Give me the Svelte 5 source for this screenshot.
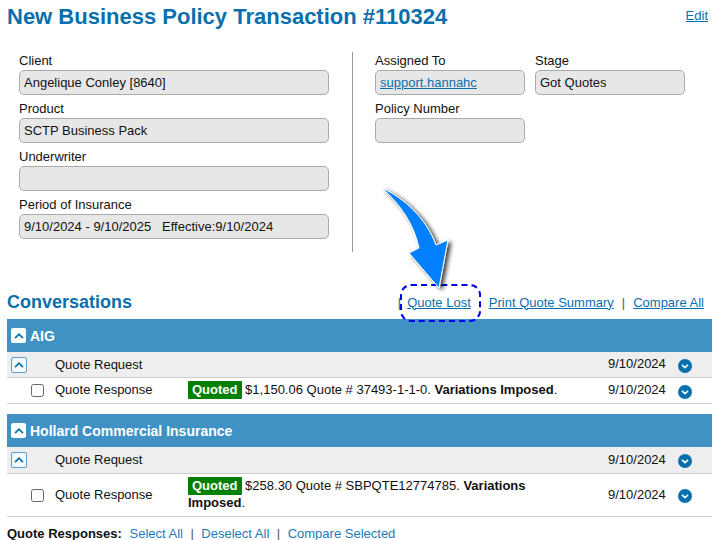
<script>
	const left = [
		{ label: 'Client', value: 'Angelique Conley [8640]' },
		{ label: 'Product', value: 'SCTP Business Pack' },
		{ label: 'Underwriter', value: '' },
		{ label: 'Period of Insurance', value: '9/10/2024 - 9/10/2025\u00a0\u00a0\u00a0Effective:9/10/2024' }
	];
</script>

{#snippet upIcon()}
	<svg viewBox="0 0 16 16" width="14" height="14" aria-hidden="true"><path d="M3.5 10.5 8 6l4.5 4.5" fill="none" stroke="currentColor" stroke-width="2" /></svg>
{/snippet}

{#snippet downBtn()}
	<span class="down">
		<svg viewBox="0 0 14 14" width="14" height="14" aria-hidden="true"><path d="M4 5.8 7 8.6l3-2.8" fill="none" stroke="#fff" stroke-width="1.6" /></svg>
	</span>
{/snippet}

<div class="page">
	<header class="top">
		<h1>New Business Policy Transaction #110324</h1>
		<a href="#edit" class="edit">Edit</a>
	</header>

	<section class="details">
		<div class="col-left">
			{#each left as f}
				<div class="field">
					<span class="label">{f.label}</span>
					<div class="box">{f.value}</div>
				</div>
			{/each}
		</div>
		<div class="col-right">
			<div class="field">
				<span class="label">Assigned To</span>
				<div class="box"><a href="#user">support.hannahc</a></div>
			</div>
			<div class="field">
				<span class="label">Stage</span>
				<div class="box">Got Quotes</div>
			</div>
			<div class="field">
				<span class="label">Policy Number</span>
				<div class="box"></div>
			</div>
		</div>
	</section>

	<div class="conv-head">
		<h2>Conversations</h2>
		<div class="actions">
			<span class="sep first">|</span>
			<a href="#lost" class="lost">Quote Lost</a>
			<a href="#print">Print Quote Summary</a>
			<span class="sep">|</span>
			<a href="#compare">Compare All</a>
		</div>
		<span class="callout"></span>
		<svg class="arrow" viewBox="0 0 90 110" width="90" height="110" aria-hidden="true">
			<defs>
				<filter id="sh" x="-30%" y="-30%" width="160%" height="160%">
					<feDropShadow dx="3" dy="2" stdDeviation="2" flood-color="#000" flood-opacity="0.75" />
				</filter>
			</defs>
			<path d="M2 2C24 12 46 32 56 59L68 54 59 102 29 67 39 62C34 38 20 18 2 2Z" fill="#0080ff" stroke="#fff" stroke-width="1" filter="url(#sh)" />
		</svg>
	</div>

	<section class="group">
		<div class="group-head"><span class="up white">{@render upIcon()}</span>AIG</div>
		<div class="row request">
			<span class="up outline">{@render upIcon()}</span>
			<span class="name">Quote Request</span>
			<span class="desc"></span>
			<span class="date">9/10/2024</span>
			{@render downBtn()}
		</div>
		<div class="row response">
			<span class="check"></span>
			<span class="name">Quote Response</span>
			<span class="desc"><span class="badge">Quoted</span> $1,150.06 Quote # 37493-1-1-0. <b>Variations Imposed</b>.</span>
			<span class="date">9/10/2024</span>
			{@render downBtn()}
		</div>
	</section>

	<section class="group">
		<div class="group-head"><span class="up white">{@render upIcon()}</span>Hollard Commercial Insurance</div>
		<div class="row request">
			<span class="up outline">{@render upIcon()}</span>
			<span class="name">Quote Request</span>
			<span class="desc"></span>
			<span class="date">9/10/2024</span>
			{@render downBtn()}
		</div>
		<div class="row response tall">
			<span class="check"></span>
			<span class="name">Quote Response</span>
			<span class="desc"><span class="badge">Quoted</span> $258.30 Quote # SBPQTE12774785. <b>Variations Imposed</b>.</span>
			<span class="date">9/10/2024</span>
			{@render downBtn()}
		</div>
	</section>

	<footer class="foot">
		<b>Quote Responses:</b>
		<a href="#all">Select All</a><span class="sep">|</span><a href="#none">Deselect All</a><span class="sep">|</span><a href="#sel">Compare Selected</a>
	</footer>
</div>

<style>
	:global(body) {
		margin: 0;
		background: #fff;
	}

	.page {
		width: 716px;
		height: 540px;
		overflow: hidden;
		font-family: 'Liberation Sans', Arial, sans-serif;
		font-size: 13px;
		color: #111;
	}

	a {
		color: #0a6fad;
	}

	/* title */
	.top {
		display: flex;
		justify-content: space-between;
		padding: 4px 8px 0 7px;
		height: 48px;
		box-sizing: border-box;
	}

	h1 {
		margin: 0;
		font-size: 22px;
		line-height: 26px;
		color: #0a6fad;
	}

	.edit {
		line-height: 16px;
		margin-top: 4px;
	}

	/* details */
	.details {
		display: flex;
		height: 200px;
		margin-top: 4px;
	}

	.col-left {
		width: 310px;
		margin-left: 19px;
		padding-right: 23px;
		border-right: 1px solid #999;
	}

	.col-right {
		display: grid;
		grid-template-columns: 150px 150px;
		column-gap: 10px;
		margin-left: 22px;
		align-content: start;
	}

	.field {
		height: 48px;
	}

	.label {
		display: block;
		line-height: 18px;
		height: 18px;
	}

	.box {
		box-sizing: border-box;
		height: 25px;
		line-height: 23px;
		padding: 0 4px;
		background: #e7e7e7;
		border: 1px solid #aaa;
		border-radius: 5px;
		white-space: nowrap;
	}

	/* conversations */
	.conv-head {
		position: relative;
		z-index: 1;
		display: flex;
		justify-content: space-between;
		align-items: center;
		height: 38px;
		margin-top: 29px;
		padding: 0 12px 0 7px;
		box-sizing: border-box;
	}

	h2 {
		margin: 0;
		font-size: 18px;
		color: #0a6fad;
		padding-top: 4px;
	}

	.actions {
		display: flex;
		align-items: center;
		padding-top: 4px;
	}

	.sep {
		color: #555;
		margin: 0 7.5px;
	}

	.actions .sep {
		margin: 0 8px;
	}

	.actions .sep.first {
		margin: 0 6px 0 0;
	}

	.lost {
		margin-right: 18px;
	}

	.callout {
		position: absolute;
		left: 400px;
		top: 3px;
		width: 77px;
		height: 34px;
		border: 2px dashed #0000ee;
		border-radius: 11px;
	}

	.arrow {
		position: absolute;
		left: 380px;
		top: -95px;
	}

	.group {
		margin: 0 4px 10px 7px;
	}

	.group-head {
		display: flex;
		align-items: center;
		height: 33px;
		background: #3f92c3;
		color: #fff;
		font-weight: 700;
		font-size: 14px;
		padding-left: 4px;
		gap: 4px;
	}

	.up {
		display: inline-flex;
		align-items: center;
		justify-content: center;
		box-sizing: border-box;
		width: 15px;
		height: 15px;
		border-radius: 2px;
		flex: none;
	}

	.up.white {
		background: #fff;
		color: #0a6fad;
	}

	.up.outline {
		width: 16px;
		height: 16px;
		background: #f4f8fb;
		color: #0a6fad;
		border: 1px solid #5a9fd0;
		margin-left: 4px;
		margin-right: 28px;
	}

	.row {
		display: flex;
		align-items: center;
		min-height: 26px;
		box-sizing: border-box;
		border-bottom: 1px solid #ccc;
		background: #fff;
	}

	.row.request {
		background: #eee;
	}

	.group + .group .row.request {
		min-height: 27px;
	}

	.group + .group .request .name {
		margin-top: -1px;
	}

	.row.tall {
		height: 43px;
	}

	.check {
		box-sizing: border-box;
		width: 13px;
		height: 13px;
		border: 1px solid #666;
		border-radius: 2.5px;
		background: #fff;
		margin-left: 24px;
		margin-right: 11px;
		flex: none;
	}

	.name {
		width: 133px;
		flex: none;
	}

	.response .name,
	.response .desc {
		margin-top: -2px;
	}

	.desc {
		box-sizing: border-box;
		width: 420px;
		padding-right: 40px;
		flex: none;
		line-height: 17px;
	}

	.badge {
		display: inline-block;
		background: #008000;
		color: #fff;
		font-weight: 700;
		padding: 0 4px;
		line-height: 18px;
		margin-bottom: -1px;
		border-radius: 1px;
	}

	.date {
		width: 70px;
		flex: none;
		margin-top: -2px;
	}

	.down {
		display: inline-flex;
		width: 14px;
		height: 14px;
		border-radius: 50%;
		background: #0a6fad;
		flex: none;
		margin-top: 2px;
	}

	.foot {
		padding-left: 7px;
		line-height: 16px;
		margin-top: -1px;
	}

	.foot b {
		margin-right: 4px;
	}

	.foot a {
		color: #1e7ab8;
		text-decoration: none;
	}
</style>
